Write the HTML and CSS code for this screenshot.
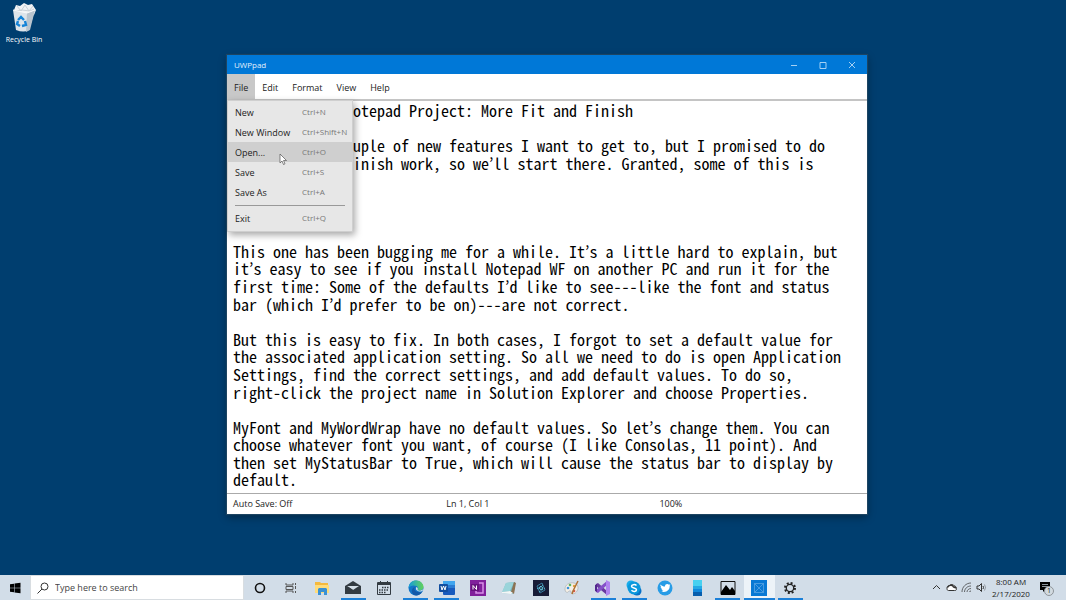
FILE: index.html
```html
<!DOCTYPE html>
<html lang="en">
<head>
  <meta charset="UTF-8">
  <meta name="viewport" content="width=device-width, initial-scale=1.0">
  <title>UWPpad</title>
  <link rel="stylesheet" href="styles.css">
</head>
<body>
  <main class="desktop">
    <a class="desktop-icon" href="#recycle">
      <svg width="28" height="32" viewBox="0 0 28 32">
        <path d="M4 8l2-5 4 1 4-3 4 2 4-1 4 6-2 5H6z" fill="#f1f3f5"/>
        <path d="M7 4l4 5 4-6 4 6 4-5M5 9l7-1 8 1 4-2" fill="none" stroke="#c9d1d8"/>
        <path d="M3 8l3 20q8 3 13 0l6-20-8 3z" fill="#dde4ea"/>
        <path d="M17 11l8-3-5 20-4 2z" fill="#b9c4ce"/>
        <path d="M3 8l14 3 8-3" fill="none" stroke="#f8f9fa"/>
        <path d="M8 18l3-3 3 3M15 19l1 4-4 1M10 24l-3-2 1-3" fill="none" stroke="#1583d7" stroke-width="2.4"/>
      </svg>
      <span>Recycle Bin</span>
    </a>

    <section class="window">
      <header class="titlebar">
        <span class="title">UWPpad</span>
        <button class="caption" aria-label="Minimize"><svg width="8" height="8" viewBox="0 0 8 8"><path d="M1 4.5h6"/></svg></button>
        <button class="caption" aria-label="Maximize"><svg width="8" height="8" viewBox="0 0 8 8"><path d="M1 1.5h6v6h-6z"/></svg></button>
        <button class="caption" aria-label="Close"><svg width="8" height="8" viewBox="0 0 8 8"><path d="M1 1l6 6M7 1l-6 6"/></svg></button>
      </header>

      <nav class="menubar">
        <button class="menu-button open">File</button>
        <button class="menu-button">Edit</button>
        <button class="menu-button">Format</button>
        <button class="menu-button">View</button>
        <button class="menu-button">Help</button>
        <div class="menu">
          <button class="menu-item"><span>New</span><kbd>Ctrl+N</kbd></button>
          <button class="menu-item"><span>New Window</span><kbd>Ctrl+Shift+N</kbd></button>
          <button class="menu-item hover"><span>Open...</span><kbd>Ctrl+O</kbd></button>
          <button class="menu-item"><span>Save</span><kbd>Ctrl+S</kbd></button>
          <button class="menu-item"><span>Save As</span><kbd>Ctrl+A</kbd></button>
          <hr>
          <button class="menu-item"><span>Exit</span><kbd>Ctrl+Q</kbd></button>
          <svg class="cursor" width="8" height="12" viewBox="0 0 8 12"><path d="M1 1v9l2-2 1.500 3.500 1.500-.7-1.500-3.300h3z"/></svg>
        </div>
      </nav>

      <textarea class="editor" rows="22" wrap="off" spellcheck="false" aria-label="Document">
Modernizing a Notepad Project: More Fit and Finish

There are a  couple of new features I want to get to, but I promised to do
some fit and  finish work, so we’ll start there. Granted, some of this is




This one has been bugging me for a while. It’s a little hard to explain, but
it’s easy to see if you install Notepad WF on another PC and run it for the
first time: Some of the defaults I’d like to see---like the font and status
bar (which I’d prefer to be on)---are not correct.

But this is easy to fix. In both cases, I forgot to set a default value for
the associated application setting. So all we need to do is open Application
Settings, find the correct settings, and add default values. To do so,
right-click the project name in Solution Explorer and choose Properties.

MyFont and MyWordWrap have no default values. So let’s change them. You can
choose whatever font you want, of course (I like Consolas, 11 point). And
then set MyStatusBar to True, which will cause the status bar to display by
default.</textarea>

      <footer class="statusbar">
        <span>Auto Save: Off</span>
        <span>Ln 1, Col 1</span>
        <span>100%</span>
      </footer>
    </section>
  </main>

  <footer class="taskbar">
    <button class="start" aria-label="Start">
      <svg width="12" height="12" viewBox="0 0 12 12"><path d="M1 2.300l4-.6v4H1zM5.500 1.600L11.500.8v4.900h-6zM1 6.200h4v4.100l-4-.6zM5.500 6.200h6v5l-6-.8z"/></svg>
    </button>
    <label class="search">
      <svg width="12" height="12" viewBox="0 0 12 12"><circle cx="7.500" cy="4.500" r="3.500"/><path d="M5 7l-4.500 4.500"/></svg>
      <input type="text" placeholder="Type here to search" aria-label="Search">
    </label>

    <div class="apps">
      <button class="app" aria-label="Cortana">
        <svg viewBox="0 0 16 16"><circle cx="8" cy="8" r="4.500" fill="none" stroke="#111" stroke-width="1.600"/></svg>
      </button>
      <button class="app" aria-label="Task View">
        <svg viewBox="0 0 16 16"><path d="M3 3v2h7V3M3 13v-2h7v2M3 6.500h7v3H3zM12.500 3v2M12.500 6v3M12.500 11v2" fill="none" stroke="#555"/></svg>
      </button>
      <button class="app" aria-label="File Explorer">
        <svg viewBox="0 0 16 16"><path d="M1 2h5l1 1h7v9H1z" fill="#f5b93e"/><path d="M1 5h14v8H1z" fill="#ffdc7b"/><path d="M4 15V9l1-1h7l1 1v6h-3v-3H7v3z" fill="#3a91d4"/></svg>
      </button>
      <button class="app running" aria-label="Mail">
        <svg viewBox="0 0 16 16"><path d="M0 6l8-5 8 5v8H0z" fill="#333b42"/><path d="M2 6h12l-6 4z" fill="#d5dfe8"/><path d="M2 6l6 4-3 1z" fill="#333b42"/></svg>
      </button>
      <button class="app" aria-label="Calendar">
        <svg viewBox="0 0 16 16"><path d="M1.500 2.500h13v12h-13z" fill="none" stroke="#333b42"/><path d="M1 3h14v2H1zM4 1h1v3H4zM11 1h1v3h-1z" fill="#333b42"/><path d="M6 7.500h7M3 10h10M3 12.500h7" stroke="#333b42" stroke-width="1.500" stroke-dasharray="1.500 1"/></svg>
      </button>
      <button class="app running" aria-label="Edge">
        <svg viewBox="0 0 16 16"><defs><linearGradient id="edge"><stop offset="0" stop-color="#159bdc"/><stop offset="1" stop-color="#62d35a"/></linearGradient></defs><circle cx="8" cy="8" r="7.500" fill="#1375c8"/><path d="M.5 8C1 3 4 .5 8 .5c5 0 7.500 3.500 7.500 6.500 0 3-4 4.500-6 3 1-1 1-3-1-4C5 4.500 2 6 .5 8z" fill="url(#edge)"/><path d="M7 7c-2 3 1 6 7 5-2 3-5 4-8 3-3-2-3-7 1-8z" fill="#1459a8"/><path d="M8.500 7c-1.500 2 0 4.500 4 4.500 2 0 3-2 3-3-1 2-4 3-6 1.500.7-1 .3-2.300-1-3z" fill="#dce6ee"/></svg>
      </button>
      <button class="app running" aria-label="Word">
        <svg viewBox="0 0 16 16"><rect x="4" y="1" width="12" height="14" rx="1" fill="#185abd"/><path d="M4 1h12v4H4z" fill="#41a5ee"/><path d="M4 5h12v3H4z" fill="#2b7cd3"/><rect y="4" width="9" height="8" rx="1" fill="#124ea0"/><path d="M2 6l1 4 1.500-4L6 10l1-4" fill="none" stroke="#fff"/></svg>
      </button>
      <button class="app" aria-label="OneNote">
        <svg viewBox="0 0 16 16"><path d="M0 0h16v16H0z" fill="#80209b"/><path d="M9 3h4v10H6v-2" fill="none" stroke="#d88fe8" stroke-width="1.500"/><path d="M1 4h8v7H1z" fill="#67127e"/><path d="M3 9.500v-4l3.500 4v-4" fill="none" stroke="#fff"/></svg>
      </button>
      <button class="app" aria-label="Notepad">
        <svg viewBox="0 0 16 16"><path d="M5 3l9-1-2 12-11-1z" fill="#78b7c1"/><path d="M5 3l8-1-4 9-8 1z" fill="#9ad4da"/><path d="M13 2l2 1-2 11-3-2z" fill="#8c7253"/><path d="M1 12l8-1 3 2-2 1-9-1z" fill="#f3f6f6"/></svg>
      </button>
      <button class="app" aria-label="Photo editor">
        <svg viewBox="0 0 16 16"><path d="M0 0h16v16H0z" fill="#171b36"/><path d="M4 6l5-3 3 7-5 3z" fill="none" stroke="#377b9d"/><path d="M4 9l6-4M6 12l6-4" stroke="#57b8d0" stroke-dasharray="2 1"/><circle cx="8" cy="8" r="1.500" fill="none" stroke="#68cadf"/></svg>
      </button>
      <button class="app" aria-label="Paint">
        <svg viewBox="0 0 16 16"><path d="M1 9c0-4 4-7 9-6 4 1 5 5 3 8-2 4-6 3-6 1s-2-1-3 0-3 0-3-3z" fill="#f4efe6" stroke="#a9aeb0" stroke-width=".7"/><circle cx="4" cy="8" r="1.300" fill="#3c91da"/><circle cx="6" cy="5" r="1.300" fill="#5bb560"/><circle cx="10" cy="6" r="1.200" fill="#e6a23b"/><circle cx="10" cy="11" r="1.300" fill="#d85850"/><path d="M14 1L9 11l-1 3" fill="none" stroke="#ae7135" stroke-width="1.500"/></svg>
      </button>
      <button class="app running" aria-label="Visual Studio">
        <svg viewBox="0 0 16 16"><path d="M1 4l2-1 9 8v4L1 6z" fill="#68389f"/><path d="M1 12l2 1 9-8V1L1 10z" fill="#8551c8"/><path d="M0 5l2-1v8l-2-1z" fill="#52268d"/><path d="M11 0l4 2v12l-4 2z" fill="#b083ef"/></svg>
      </button>
      <button class="app running" aria-label="Skype">
        <svg viewBox="0 0 16 16"><circle cx="5" cy="5" r="4.500" fill="#17aceb"/><circle cx="11" cy="11" r="4.500" fill="#0870c7"/><circle cx="8" cy="8" r="6.500" fill="#0b98dc"/><path d="M10.500 5.500C9 4 5.500 4.500 5.500 6.300 5.500 8.500 10.500 7.500 10.500 9.800c0 2-3.500 2.200-5 .5" fill="none" stroke="#fff" stroke-width="1.500"/></svg>
      </button>
      <button class="app" aria-label="Twitter">
        <svg viewBox="0 0 16 16"><circle cx="8" cy="8" r="7.500" fill="#279ce6"/><path d="M3.500 4.500C5 6 6 6.500 8 6.500c0-3 3-3 4-1.700l1.300-.5-.6 1.500C13 10 9.500 13 4 11.500c1 0 2-.3 2.500-.8-1 0-1.700-.7-2-1.500h1C4.300 8.700 3.700 8 3.700 7l.8.200C3.500 6.500 3.200 5.500 3.500 4.500z" fill="#fff"/></svg>
      </button>
      <button class="app" aria-label="Your Phone">
        <svg viewBox="0 0 16 16"><path d="M4 0h9v16H4z" fill="#1188db"/><path d="M4 0h9v6H4z" fill="#47d0f0"/><path d="M4 6h9v3H4z" fill="#24a9e5"/><path d="M4 12h9v4H4z" fill="#075ead"/></svg>
      </button>
      <button class="app running" aria-label="Photos">
        <svg viewBox="0 0 16 16"><path d="M1 1.500h14v13H1z" fill="none" stroke="#111"/><path d="M1 12l5-7 4 5 2-3 3 4v4H1z"/></svg>
      </button>
      <button class="app running current" aria-label="UWPpad">
        <svg viewBox="0 0 16 16"><path d="M0 0h16v16H0z" fill="#0878d4"/><path d="M3.500 3.500h9v9h-9zM3.500 3.500l9 9M12.500 3.500l-9 9" fill="none" stroke="#64abe5" stroke-width=".7"/></svg>
      </button>
      <button class="app running" aria-label="Settings">
        <svg viewBox="0 0 16 16"><circle cx="8" cy="8" r="5" fill="none" stroke="#222" stroke-width="2" stroke-dasharray="2 1.930"/><circle cx="8" cy="8" r="3.700" fill="none" stroke="#222" stroke-width="1.300"/></svg>
      </button>
    </div>

    <div class="tray">
      <button class="tray-icon" aria-label="Show hidden icons"><svg viewBox="0 0 11 11"><path d="M2 7l3.500-3.500L9 7"/></svg></button>
      <button class="tray-icon" aria-label="OneDrive"><svg viewBox="0 0 11 11"><path d="M1 6c0-2 1.500-2 2-2 1-2 5-2 5 0 2 0 2.500 1.500 2.500 2.500 0 2-1 2-2 2H2.500C1 8.500 1 7 1 6z" fill="#fff"/><path d="M1.500 5.500c1-2.500 5-3 6-.5l2.500 1"  stroke-width="1.500"/></svg></button>
      <button class="tray-icon" aria-label="Network"><svg viewBox="0 0 11 11"><path d="M1 10C1 5 5 1 10 1M3.500 10C3.500 7 6 4 10 4M6 10c0-2 2-3.500 4-3.500M8.500 10q0-1 1.500-1" opacity=".7"/></svg></button>
      <button class="tray-icon" aria-label="Volume"><svg viewBox="0 0 11 11"><path d="M1 4h2l2.500-2.500v8L3 7H1zM7 4q1 1.500 0 3"/><path d="M8.500 2.500q2 3 0 6" opacity=".4"/></svg></button>
      <time class="clock"><span>8:00 AM</span><span>2/17/2020</span></time>
      <button class="notifications" aria-label="Notifications">
        <svg width="16" height="16" viewBox="0 0 16 16"><path d="M1 2h10v8H6l-2 2v-2H1z"/><path d="M3 4.500h6M3 6.500h6" stroke="#8b949c"/><circle cx="10" cy="11" r="4.500" fill="#d3dae0" stroke="#8e9499"/></svg>
        <span class="badge">1</span>
      </button>
    </div>
  </footer>
</body>
</html>
```
FILE: styles.css
```css
* {
  box-sizing: border-box;
}

body {
  margin: 0;
  min-height: 100vh;
  display: flex;
  flex-direction: column;
  background: #003e6f;
  color: #222;
  font-family: "Open Sans", "Noto Sans", sans-serif;
  font-size: 9px;
}

button {
  margin: 0;
  padding: 0;
  border: none;
  background: none;
  color: inherit;
  font: inherit;
}

svg {
  display: block;
}

.desktop {
  flex: 1;
  position: relative;
}

.desktop-icon {
  display: flex;
  flex-direction: column;
  align-items: center;
  width: 48px;
  padding-top: 2px;
  color: #fff;
  font-size: 7px;
  line-height: 12px;
  text-decoration: none;
}

/* window */
.window {
  position: absolute;
  top: 55px;
  left: 227px;
  width: 60%;
  display: flex;
  flex-direction: column;
  background: #fff;
  box-shadow: 0 0 1px 1px #1c4462, 0 3px 8px rgba(0, 0, 0, 0.4);
}

.titlebar {
  display: flex;
  align-items: center;
  height: 19px;
  background: #0078d7;
  color: #e0effb;
  font-size: 8px;
}

.title {
  flex: 1;
  padding-left: 7px;
}

.caption {
  display: flex;
  align-items: center;
  justify-content: center;
  width: 29px;
  height: 19px;
}

.caption svg {
  fill: none;
  stroke: #a5d0f3;
}

.menubar {
  position: relative;
  display: flex;
  height: 27px;
  border-bottom: 2px solid #c4c4c4;
}

.menu-button {
  padding: 2px 7px 0;
}

.menu-button.open {
  background: #c8c8c8;
}

.menu {
  position: absolute;
  top: 26px;
  left: 0;
  width: 126px;
  padding: 1px 0 3px;
  background: #e7e7e7;
  border: 1px solid #cfcfcf;
  box-shadow: 2px 3px 7px rgba(0, 0, 0, 0.35);
}

.menu-item {
  display: grid;
  grid-template-columns: 67px 1fr;
  align-items: center;
  width: 100%;
  height: 20px;
  padding-left: 7px;
  text-align: left;
  white-space: nowrap;
}

.menu-item.hover {
  background: #cfcfcf;
}

.menu-item kbd {
  padding-bottom: 1px;
  color: #777;
  font-family: inherit;
  font-size: 8px;
}

.menu hr {
  margin: 3px 7px 2px;
  border: none;
  border-top: 1px solid #999;
}

.cursor {
  position: absolute;
  top: 52px;
  left: 51px;
  fill: #fff;
  stroke: #555;
  stroke-width: 0.7;
}

.editor {
  display: block;
  width: 100%;
  margin: 0;
  padding: 1px 6px 4px;
  border: none;
  outline: none;
  resize: none;
  overflow: hidden;
  color: #000;
  font-family: "Noto Sans Mono CJK KR", "Liberation Mono", monospace;
  font-size: 16px;
  line-height: 1.1;
}

.statusbar {
  display: grid;
  grid-template-columns: repeat(3, 1fr);
  align-items: center;
  height: 21px;
  padding-bottom: 2px;
  border-top: 1px solid #aaa;
}

.statusbar span {
  padding-left: 6px;
}

/* taskbar */
.taskbar {
  display: flex;
  height: 25px;
  background: #d2dde8;
}

.start {
  display: flex;
  align-items: center;
  justify-content: center;
  width: 30px;
}

.search {
  flex: 0 1 214px;
  display: flex;
  align-items: center;
  gap: 6px;
  padding-left: 6px;
  background: #fff;
  border: 1px solid #d8dde1;
}

.search svg {
  fill: none;
  stroke: #333;
}

.search input {
  flex: 1;
  min-width: 0;
  padding: 0;
  border: none;
  outline: none;
  background: none;
  font-family: inherit;
  font-size: 9px;
}

.search input::placeholder {
  color: #444;
}

.apps {
  flex: 0 1 562px;
  display: flex;
}

.app {
  flex: 1;
  display: flex;
  align-items: center;
  justify-content: center;
  background-repeat: no-repeat;
  background-position: bottom;
  background-size: 25px 2px;
}

.app svg {
  width: 16px;
  height: 16px;
}

.app.running {
  background-image: linear-gradient(#1c80d8, #1c80d8);
}

.app.current {
  background-color: #edf3f8;
  background-size: 100% 2px;
}

.tray {
  display: flex;
  align-items: center;
  margin-left: auto;
  padding-right: 11px;
}

.tray-icon {
  width: 15px;
}

.tray-icon svg {
  width: 11px;
  height: 11px;
  margin: 0 auto;
  fill: none;
  stroke: #333;
}

.clock {
  display: flex;
  flex-direction: column;
  align-items: center;
  width: 44px;
  font-size: 8px;
  line-height: 12px;
}

.notifications {
  position: relative;
  margin-left: 6px;
}

.badge {
  position: absolute;
  top: 6px;
  left: 8px;
  font-size: 7px;
  line-height: 10px;
}
```
